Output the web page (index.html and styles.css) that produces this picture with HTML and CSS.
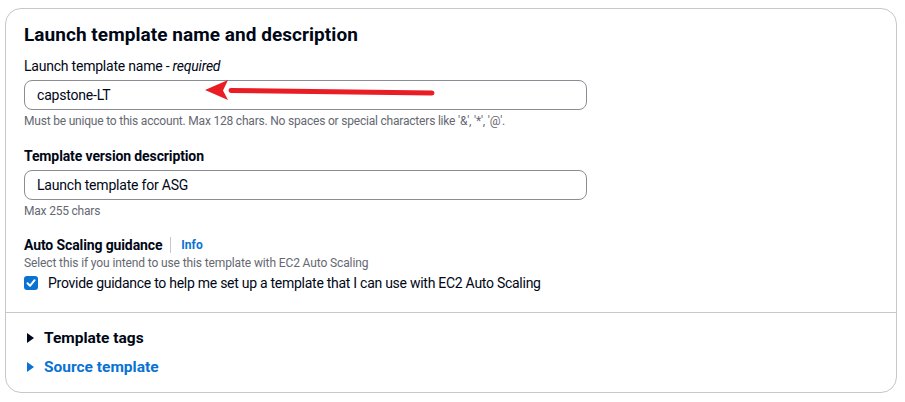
FILE: index.html
```html
<!DOCTYPE html>
<html>
<head>
<meta charset="utf-8">
<link rel="stylesheet" href="styles.css">
</head>
<body>
<div class="card">
  <div class="main">
    <h2 class="title">Launch template name and description</h2>
    <div class="field f1">
      <div class="label">Launch template name - <i>required</i></div>
      <div class="input-wrap">
        <div class="input">capstone-LT</div>
        <svg class="arrow" width="240" height="30" viewBox="0 0 240 30">
          <path d="M26 11.5 L227 14" stroke="#ea1c24" stroke-width="5" stroke-linecap="round" fill="none"/>
          <path d="M0 11 L23 1 L18 11.5 L23 21 Z" fill="#ea1c24"/>
        </svg>
      </div>
      <div class="help">Must be unique to this account. Max 128 chars. No spaces or special characters like '&amp;', '*', '@'.</div>
    </div>
    <div class="field f2">
      <div class="label bold">Template version description</div>
      <div class="input">Launch template for ASG</div>
      <div class="help">Max 255 chars</div>
    </div>
    <div class="field f3">
      <div class="label bold row">Auto Scaling guidance <span class="sep"></span><a class="info">Info</a></div>
      <div class="help desc">Select this if you intend to use this template with EC2 Auto Scaling</div>
      <label class="check">
        <span class="box"><svg width="14" height="14" viewBox="0 0 14 14"><path d="M3.5 7.3 L6 9.8 L10.6 4.2" stroke="#fff" stroke-width="2" fill="none" stroke-linecap="round" stroke-linejoin="round"/></svg></span>
        <span>Provide guidance to help me set up a template that I can use with EC2 Auto Scaling</span>
      </label>
    </div>
  </div>
  <div class="footer">
    <div class="exp"><span class="tri"></span>Template tags</div>
    <div class="exp blue"><span class="tri"></span>Source template</div>
  </div>
</div>
</body>
</html>
```
FILE: styles.css
```css
html, body { margin: 0; padding: 0; background: #fff; }
body {
  font-family: Roboto, "Open Sans", Arial, sans-serif;
  color: #000716;
  padding: 8px 8px 0 5px;
}
.card {
  width: 892px;
  height: 385px;
  border: 1px solid #c6c6cd;
  border-radius: 16px;
  display: flex;
  flex-direction: column;
  box-sizing: border-box;
}
.main {
  padding: 15px 18px 0 18px;
  height: 304px;
  box-sizing: border-box;
  border-bottom: 1px solid #c6c6cd;
}
.title {
  margin: 0;
  font-size: 19px;
  line-height: 22px;
  font-weight: 700;
  letter-spacing: 0.05px;
}
.field { display: flex; flex-direction: column; }
.f1 { margin-top: 9px; }
.f2 { margin-top: 16px; }
.f3 { margin-top: 15px; }
.label {
  font-size: 14px;
  line-height: 22px;
  letter-spacing: -0.22px;
}
.label i { font-style: italic; }
.bold { font-weight: 700; letter-spacing: -0.12px; }
.row { display: flex; align-items: center; }
.sep {
  display: inline-block;
  width: 1px;
  height: 16px;
  background: #c6c6cd;
  margin: 0 10px 0 8px;
}
.info {
  color: #0972d3;
  font-size: 12px;
  font-weight: 700;
  letter-spacing: 0;
}
.input-wrap { position: relative; }
.input {
  margin-top: 3px;
  width: 563px;
  height: 30px;
  box-sizing: border-box;
  border: 1px solid #8c8c94;
  border-radius: 8px;
  padding: 0 12px;
  font-size: 14px;
  line-height: 28px;
  letter-spacing: -0.2px;
}
.arrow {
  position: absolute;
  left: 181px;
  top: 2px;
}
.help {
  margin-top: 3px;
  font-size: 12px;
  line-height: 16px;
  color: #656871;
  letter-spacing: -0.2px;
}
.desc { margin-top: -1px; letter-spacing: -0.12px; }
.check {
  display: flex;
  align-items: center;
  gap: 10px;
  font-size: 14px;
  line-height: 22px;
  margin-top: 1px;
  letter-spacing: -0.27px;
}
.box {
  width: 14px;
  height: 14px;
  background: #0972d3;
  border-radius: 3px;
  display: inline-flex;
}
.footer {
  padding: 14px 18px 0 21px;
  display: flex;
  flex-direction: column;
  gap: 7px;
}
.exp {
  display: flex;
  align-items: center;
  font-size: 15.5px;
  font-weight: 700;
  line-height: 22px;
}
.exp .tri {
  width: 0; height: 0;
  border-top: 5px solid transparent;
  border-bottom: 5px solid transparent;
  border-left: 7px solid #000716;
  margin-right: 10px;
}
.blue { color: #0972d3; }
.blue .tri { border-left-color: #0972d3; }
```
